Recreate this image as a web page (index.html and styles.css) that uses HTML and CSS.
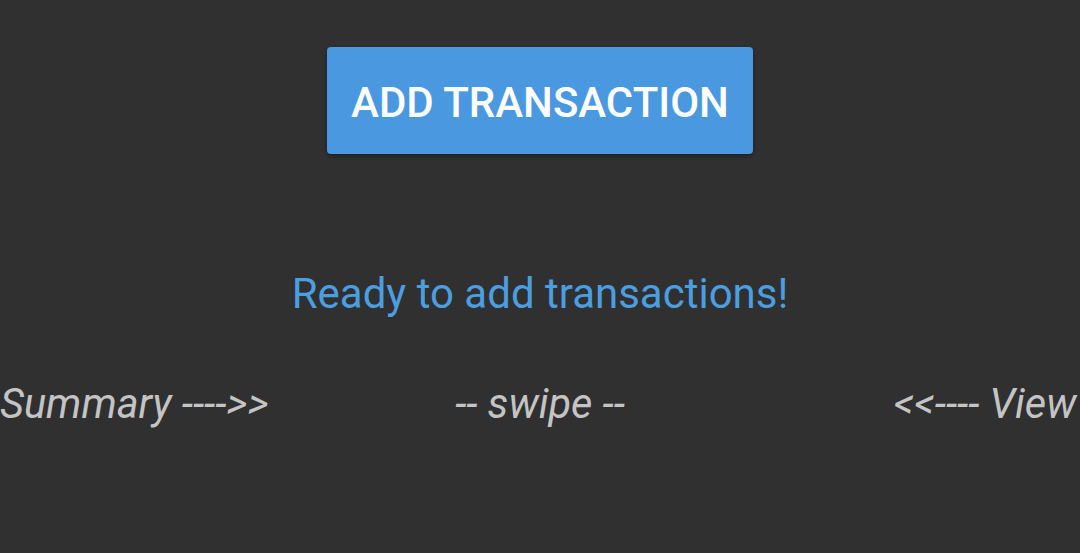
FILE: index.html
```html
<!DOCTYPE html>
<html>
<head>
<meta charset="utf-8">
<link rel="stylesheet" href="styles.css">
</head>
<body>
<main class="screen">
  <div class="actions">
    <button class="add-btn">ADD TRANSACTION</button>
  </div>
  <p class="status">Ready to add transactions!</p>
  <div class="pager">
    <span class="pager-left">Summary ----&gt;&gt;</span>
    <span class="pager-center">-- swipe --</span>
    <span class="pager-right">&lt;&lt;---- View</span>
  </div>
</main>
</body>
</html>
```
FILE: styles.css
```css
html, body {
  margin: 0;
  padding: 0;
  background: #303030;
  height: 100%;
  overflow: hidden;
}
.screen {
  font-family: Roboto, "Noto Sans", sans-serif;
  display: flex;
  flex-direction: column;
  align-items: stretch;
  padding-top: 47px;
}
.actions {
  display: flex;
  justify-content: center;
}
.add-btn {
  width: 426px;
  height: 107px;
  background: #4a98df;
  color: #ffffff;
  border: none;
  border-radius: 4px;
  font-family: Roboto, sans-serif;
  font-weight: 500;
  font-size: 42px;
  padding: 4px 0 0 0;
  box-shadow: 0 2px 4px rgba(0,0,0,0.35);
}
.status {
  margin: 116px 0 0 0;
  text-align: center;
  color: #4b9ee0;
  font-size: 42px;
  line-height: 48px;
}
.pager {
  margin-top: 62px;
  display: grid;
  grid-template-columns: 1fr auto 1fr;
  font-style: italic;
  font-size: 41.5px;
  line-height: 48px;
  color: #c4c4c4;
  white-space: nowrap;
}
.pager-left {
  justify-self: start;
}
.pager-center {
  justify-self: center;
}
.pager-right {
  padding-left: 269px;
  overflow: hidden;
}
```
